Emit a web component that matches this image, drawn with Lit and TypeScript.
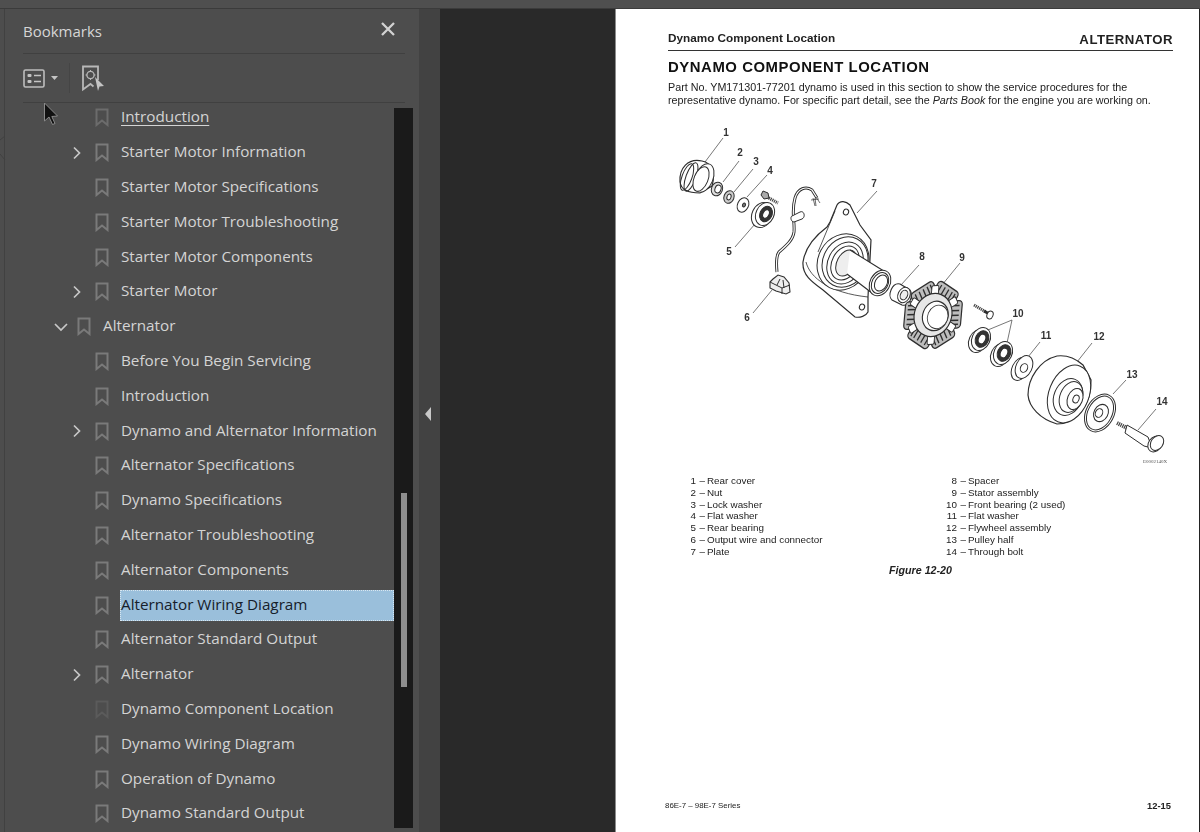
import { LitElement, html, css, svg } from "lit";
import { customElement } from "lit/decorators.js";

type Row = { t: string; l: number; c?: "r" | "d"; dim?: boolean; sel?: boolean; u?: boolean };
const rows: Row[] = [
  { t: "Introduction", l: 1, u: true },
  { t: "Starter Motor Information", l: 1, c: "r" },
  { t: "Starter Motor Specifications", l: 1 },
  { t: "Starter Motor Troubleshooting", l: 1 },
  { t: "Starter Motor Components", l: 1 },
  { t: "Starter Motor", l: 1, c: "r" },
  { t: "Alternator", l: 0, c: "d" },
  { t: "Before You Begin Servicing", l: 1 },
  { t: "Introduction", l: 1 },
  { t: "Dynamo and Alternator Information", l: 1, c: "r" },
  { t: "Alternator Specifications", l: 1 },
  { t: "Dynamo Specifications", l: 1 },
  { t: "Alternator Troubleshooting", l: 1 },
  { t: "Alternator Components", l: 1 },
  { t: "Alternator Wiring Diagram", l: 1, sel: true },
  { t: "Alternator Standard Output", l: 1 },
  { t: "Alternator", l: 1, c: "r" },
  { t: "Dynamo Component Location", l: 1, dim: true },
  { t: "Dynamo Wiring Diagram", l: 1 },
  { t: "Operation of Dynamo", l: 1 },
  { t: "Dynamo Standard Output", l: 1 },
];

const legendL = [
  ["1", "Rear cover"], ["2", "Nut"], ["3", "Lock washer"], ["4", "Flat washer"],
  ["5", "Rear bearing"], ["6", "Output wire and connector"], ["7", "Plate"],
];
const legendR = [
  ["8", "Spacer"], ["9", "Stator assembly"], ["10", "Front bearing (2 used)"], ["11", "Flat washer"],
  ["12", "Flywheel assembly"], ["13", "Pulley half"], ["14", "Through bolt"],
];

// Diagram uses screen-like coordinates; the svg viewBox starts at 660,115.
const e = (cx: number, cy: number, rx: number, ry: number, rot = 22, fill = "#fff") =>
  svg`<ellipse cx=${cx} cy=${cy} rx=${rx} ry=${ry} fill=${fill} transform="rotate(${rot} ${cx} ${cy})"/>`;
const leaders = [
  [723, 138, 705, 162], [739, 161, 723, 182], [753, 169, 734, 192], [767, 175, 747, 197],
  [735, 247, 755, 224], [753, 313, 772, 290], [877, 191, 857, 213], [919, 265, 901, 285],
  [960, 263, 942, 285], [1012, 320, 983, 332], [1012, 320, 1007, 343], [1040, 342, 1028, 357],
  [1092, 343, 1077, 362], [1126, 380, 1113, 394], [1156, 409, 1138, 430],
];
const labels: [string, number, number][] = [
  ["1", 726, 136], ["2", 740, 156], ["3", 756, 165], ["4", 770, 174], ["5", 729, 255], ["6", 747, 321],
  ["7", 874, 187], ["8", 922, 260], ["9", 962, 261], ["10", 1018, 317], ["11", 1046, 339],
  ["12", 1099, 340], ["13", 1132, 378], ["14", 1162, 405],
];
const teeth = [10, 70, 130, 190, 250, 310];

const diagram = svg`
  <g fill="#fff" stroke="#2e2e2e" stroke-width="1">
    ${leaders.map(([a, b, c, d]) => svg`<line x1=${a} y1=${b} x2=${c} y2=${d} stroke="#555" stroke-width=".8"/>`)}
    <!-- rear cover -->
    <path d="M702 161C688 158 679 168 680 182C681 190 688 193 700 193L712 186C716 172 712 163 702 161Z" stroke-width="1.2"/>
    ${e(687, 177, 5, 14, 20, "none")}${e(691, 177, 5, 15, 20, "none")}
    ${e(704, 178, 9, 15, 22)}${e(701, 179, 7, 13, 22)}
    <!-- nut, lock washer, flat washer -->
    ${e(717, 189, 5.5, 7, 20, "#ddd")}${e(718, 189, 3, 4, 20)}
    ${e(729, 197, 5, 6.5, 20, "#ccc")}${e(729, 197, 2, 3, 20)}
    ${e(743, 205, 5.5, 7.5, 25)}${e(744, 205, 1.5, 2, 25, "#777")}
    <path d="M767 197L778 203" stroke-width="3.2" stroke="#444" stroke-dasharray="1.2 .8"/>
    <path d="M763 191l5 2 1 5-5 1-3-4z" fill="#aaa"/>
    <!-- rear bearing -->
    ${e(762, 215, 10, 13, 25)}${e(765, 214, 9, 12, 25)}${e(766, 214, 6, 8, 25, "#333")}${e(766, 214, 3, 4.5, 25)}
    <!-- wire and connector -->
    <path d="M777 272C776 262 776 256 779 252C786 246 793 240 794 232C795 222 791 212 795 198C798 188 806 186 812 190L817 198" fill="none" stroke-width="3"/>
    <path d="M777 272C776 262 776 256 779 252C786 246 793 240 794 232C795 222 791 212 795 198C798 188 806 186 812 190L817 198" fill="none" stroke="#fff" stroke-width="1.200"/>
    <path d="M813 198l2 8M815 198l1 8M816 197l4 6M811 200l8-1" fill="none" stroke-width=".7"/>
    <path d="M792 216l8-4c4-2 6 5 2 7l-8 3c-3 0-4-5-2-6z" stroke-width="1"/>
    <path d="M770 282l3-3 5-4 6 2 5 6 1 9-4 2-10-3-6-3z" fill="#eee" stroke-width="1.1"/>
    <path d="M777 285l3-6M784 288l-1-8M770 282l12 6 8-3M782 288v6" fill="none"/>
    <!-- plate -->
    <path d="M827 227C815 236 805 248 803 262C802 275 812 282 823 290L855 317C860 318 866 316 868 312L868 297L871 240L860 225L850 205C846 201 840 200 837 205L830 222Z" stroke-width="1.2"/>
    <path d="M835 211L818 252M806 262C810 278 830 293 868 297" fill="none" stroke-width=".8"/>
    ${e(846, 212, 2.6, 3)}${e(862, 307, 2.6, 3)}
    ${e(843, 262, 25, 29, 28)}${e(845, 262, 22, 26, 28)}${e(845, 263, 17, 22, 28)}${e(845, 263, 13, 18, 28)}
    ${e(846, 263, 9, 14, 28, "#eee")}
    <path d="M850 250L887 273L872 293L847 274Z" stroke="none"/>
    <path d="M850 250L887 273M847 274L872 293" fill="none" stroke-width="1.1"/>
    ${e(880, 283, 10, 13.5, 28)}${e(880, 283, 8, 11, 28)}${e(881, 283, 6, 8.5, 28, "none")}
    <!-- spacer -->
    <path d="M900 284L910 290C914 296 909 307 902 305L892 300C887 296 892 282 900 284Z" stroke-width="1.1"/>
    ${e(904, 295, 6, 8, 25)}${e(904, 295, 3.5, 5, 25, "#eee")}
    <!-- stator -->
    <g transform="translate(933 315) rotate(22) scale(.84 1)">
      ${teeth.map((a) => svg`<g transform="rotate(${a})"><rect x="-14" y="-33" width="28" height="17" rx="4" fill="#bdbdbd" stroke-width="1.400"/><path d="M-9-30v11M-4-30v11M1-30v11M6-30v11M10-30v11" stroke-width="1.500"/></g>`)}
      ${teeth.map((a) => svg`<rect transform="rotate(${a + 30})" x="-4" y="-30" width="8" height="9" rx="1.500" fill="#fff"/>`)}
      <circle r="22" fill="#e6e6e6" stroke-width="1.300"/>
      <circle r="15" cx="3" stroke-width="1.300"/>
      <circle r="12" cx="6" stroke-width=".9"/>
    </g>
    <!-- small bolt -->
    <path d="M974 305L986 312" stroke-width="3" stroke="#444" stroke-dasharray="1.2 .8"/>
    <path d="M984 311L991 315" stroke-width="3"/>
    ${e(990, 315, 3, 4)}
    <!-- front bearings -->
    ${e(978, 341, 9, 12, 25)}${e(981, 339, 9, 12, 25)}${e(982, 339, 6.5, 8.5, 25, "#333")}${e(982, 339, 3.5, 5, 25)}
    ${e(1000, 355, 9, 12, 25)}${e(1003, 353, 9, 12, 25)}${e(1004, 353, 6.5, 8.5, 25, "#333")}${e(1004, 353, 3.5, 5, 25)}
    <!-- flat washer -->
    ${e(1020, 369, 8, 12, 25)}${e(1024, 367, 8, 12, 25)}${e(1024, 368, 3.5, 4.5, 25)}
    <!-- flywheel -->
    <path d="M1057 356C1040 360 1028 378 1028 395C1029 407 1040 419 1057 424C1075 424 1092 405 1091 380L1083 365C1075 358 1065 355 1057 356Z" stroke-width="1.2"/>
    ${e(1069, 394, 20, 30, 22)}${e(1068, 397, 14, 19, 22)}${e(1071, 397, 11, 16, 22)}
    ${e(1075, 399, 7.5, 11, 22)}${e(1076, 399, 3, 4, 22)}
    <!-- pulley -->
    ${e(1100, 413, 14, 20, 28)}${e(1100, 413, 12, 18, 28)}${e(1101, 413, 7, 9, 28)}${e(1099, 413, 3.5, 4.5, 28)}
    <!-- through bolt -->
    <path d="M1117 423L1127 428" stroke-width="4" stroke="#444" stroke-dasharray="1.2 .8"/>
    <path d="M1127 425L1148 437L1152 448L1144 446L1125 433Z"/>
    ${e(1155, 444, 6.5, 8.5, 35)}${e(1157, 443, 6, 8, 35)}
  </g>
  ${labels.map(([t, x, y]) => svg`<text class="lbl" x=${x} y=${y} text-anchor="middle">${t}</text>`)}
  <text class="code" x="1155" y="463" text-anchor="middle">E0002140X</text>
`;

@customElement("app-root")
export class AppRoot extends LitElement {
  static styles = css`
    :host { display: flex; flex-direction: column; width: 1200px; height: 832px; overflow: hidden; position: relative; background: #4e4e4e; }
    .topbar { height: 8px; flex: none; background: #4f4f4f; border-bottom: 1px solid #3b3b3b; }
    .main { flex: 1; min-height: 0; display: flex; }
    .rail { width: 4px; flex: none; background: #4d4d4d; border-right: 1px solid #414141; }
    .panel { width: 414px; flex: none; background: #4d4d4d; display: flex; flex-direction: column; font-family: "Open Sans", sans-serif; min-height: 0; }
    .title { height: 45px; flex: none; margin: 0 14px 0 18px; display: flex; align-items: center; justify-content: space-between; padding-right: 10px; border-bottom: 1px solid #404040; box-sizing: border-box; color: #d6d6d6; font-size: 15px; }
    .close { margin-top: -5px; }
    .tools { height: 49px; flex: none; margin: 0 14px 0 18px; display: flex; align-items: center; border-bottom: 1px solid #404040; box-sizing: border-box; }
    .tools svg { display: block; }
    .caret { margin-left: 6px; }
    .sep { width: 1px; height: 30px; background: #454545; margin: 0 11px 0 11px; }
    .body { flex: 1; min-height: 0; display: flex; }
    .tree { width: 389px; flex: none; overflow: hidden; }
    .row { height: 34.8px; display: flex; align-items: center; color: #d4d4d4; font-size: 15.25px; white-space: nowrap; }
    .row:first-child { margin-top: -2.5px; }
    .chev { width: 24px; flex: none; display: flex; }
    .bm { flex: none; margin-right: 11px; color: #7a7a7a; display: block; }
    .bm.dim { color: #5b5b5b; }
    .bm.soft { color: #6c6c6c; }
    .lab { flex: 1; height: 31px; line-height: 26px; box-sizing: border-box; border: 1px solid transparent; }
    .lab.sel { background: #9abfdb; color: #16202a; border: 1px dotted #d8e6f0; }
    .lab.u span { text-decoration: underline; text-underline-offset: 3px; }
    .track { width: 19px; flex: none; background: #1a1a1a; margin: 5px 0 4px; position: relative; }
    .thumb { position: absolute; left: 7px; width: 6px; top: 385px; height: 194px; background: #8e8e8e; }
    .splitter { width: 21px; flex: none; background: #424242; display: flex; align-items: center; justify-content: center; }
    .splitter svg { display: block; margin-top: -14px; margin-left: -3px; }
    .gap { width: 175px; flex: none; background: #292929; border-right: 1px solid #8c8c8c; }
    .page { flex: 1; min-width: 0; background: #fff; border-right: 1px solid #222; color: #222; font-family: "Liberation Sans", Arial, sans-serif; display: flex; flex-direction: column; padding: 22px 26px 21px 52px; filter: blur(.3px); }
    .head { display: flex; justify-content: space-between; align-items: flex-end; border-bottom: 1px solid #333; padding-bottom: 5px; }
    .h1 { font-size: 11.75px; margin-bottom: 1px; }
    .h2 { font-size: 13.2px; letter-spacing: .5px; margin-bottom: -2px; }
    h1 { margin: 8px 0 0; font-size: 14.9px; line-height: 17px; letter-spacing: .55px; color: #111; }
    p { margin: 5px 0 0; font-size: 10.76px; line-height: 13px; }
    .fig { display: block; margin: 8px 0 0 -8px; flex: none; }
    .lbl { font: bold 10px "Liberation Sans", Arial, sans-serif; fill: #333; }
    .code { font: 5px "Liberation Serif", serif; fill: #555; }
    .legend { display: flex; font-size: 9.85px; line-height: 11.75px; margin-top: 5px; }
    .col { display: grid; grid-template-columns: 17px 11px auto; align-content: start; }
    .col.l { margin-left: 11px; width: 261px; }
    .num { text-align: right; }
    .dash { padding-left: 3.5px; }
    .cap { margin: 7px 0 0 221px; font-size: 10.7px; font-weight: bold; font-style: italic; line-height: 13px; }
    .foot { margin-top: auto; display: flex; justify-content: space-between; align-items: center; margin-left: -3px; padding-right: 2px; font-size: 7.9px; }
    .foot b { font-size: 9.4px; }
    .cursor { position: absolute; left: 43px; top: 102px; }
    .notch { position: absolute; left: 0; top: 136px; }
  `;

  private chevron(c?: "r" | "d") {
    if (c === "r") return html`<svg width="12" height="14" viewBox="0 0 12 14"><path d="M3 1.5L8.5 7L3 12.5" fill="none" stroke="#c8c8c8" stroke-width="1.7"/></svg>`;
    if (c === "d") return html`<svg width="16" height="10" viewBox="0 0 16 10"><path d="M2 2L8 8L14 2" fill="none" stroke="#c8c8c8" stroke-width="1.7"/></svg>`;
    return null;
  }

  render() {
    return html`
      <div class="topbar"></div>
      <div class="main">
        <div class="rail"></div>
        <section class="panel">
          <div class="title">
            <span>Bookmarks</span>
            <svg class="close" width="14" height="14" viewBox="0 0 14 14"><path d="M1 1L13 13M13 1L1 13" stroke="#d2d2d2" stroke-width="2.3"/></svg>
          </div>
          <div class="tools">
            <svg width="22" height="19" viewBox="0 0 22 19" fill="none">
              <rect x="1" y="1" width="20" height="17" rx="1.5" stroke="#bdbdbd" stroke-width="1.6"/>
              <rect x="4.5" y="5" width="4" height="3" rx="1" fill="#c4c4c4"/><rect x="4.5" y="11" width="4" height="3" rx="1" fill="#c4c4c4"/>
              <path d="M11 6.5h7M11 12.5h7" stroke="#c4c4c4" stroke-width="1.6"/>
            </svg>
            <svg class="caret" width="7" height="4" viewBox="0 0 7 4"><path d="M0 0h7L3.5 4z" fill="#c4c4c4"/></svg>
            <div class="sep"></div>
            <svg width="24" height="27" viewBox="0 0 24 27" fill="none">
              <path d="M17 15V1.500H2V24.500L9.500 19L12.500 21.500" stroke="#b8b8b8" stroke-width="1.800"/>
              <circle cx="9.500" cy="10" r="3.600" stroke="#b8b8b8" stroke-width="1.300"/><path d="M9.500 5v1.500M9.500 13.500V15M4.500 10H6M13 10h1.500" stroke="#b8b8b8"/>
              <path d="M14 12L23 21L18.500 21.500L17 26Z" fill="#c4c4c4"/>
            </svg>
          </div>
          <div class="body">
            <div class="tree">
              ${rows.map((r) => html`
                <div class="row" style="padding-left:${48 + r.l * 18}px">
                  <div class="chev">${this.chevron(r.c)}</div>
                  <svg class="bm ${r.dim ? "dim" : ""} ${r.u ? "soft" : ""}" width="14" height="19" viewBox="0 0 14 19"><path d="M1.500 1.500h11v15.500L7 12.500L1.500 17Z" fill="none" stroke="currentColor" stroke-width="2"/></svg>
                  <div class="lab ${r.sel ? "sel" : ""} ${r.u ? "u" : ""}"><span>${r.t}</span></div>
                </div>`)}
            </div>
            <div class="track"><div class="thumb"></div></div>
          </div>
        </section>
        <div class="splitter"><svg width="6" height="14" viewBox="0 0 6 14"><path d="M6 0V14L0 7Z" fill="#c8c8c8"/></svg></div>
        <div class="gap"></div>
        <article class="page">
          <div class="head"><b class="h1">Dynamo Component Location</b><b class="h2">ALTERNATOR</b></div>
          <h1>DYNAMO COMPONENT LOCATION</h1>
          <p>Part No. YM171301-77201 dynamo is used in this section to show the service procedures for the<br>representative dynamo. For specific part detail, see the <i>Parts Book</i> for the engine you are working on.</p>
          <svg class="fig" width="520" height="355" viewBox="660 115 520 355">${diagram}</svg>
          <div class="legend">
            <div class="col l">${legendL.map(([n, t]) => html`<span class="num">${n}</span><span class="dash">–</span><span>${t}</span>`)}</div>
            <div class="col">${legendR.map(([n, t]) => html`<span class="num">${n}</span><span class="dash">–</span><span>${t}</span>`)}</div>
          </div>
          <div class="cap">Figure 12-20</div>
          <div class="foot"><span>86E-7 – 98E-7 Series</span><b>12-15</b></div>
        </article>
      </div>
      <svg class="notch" width="6" height="24" viewBox="0 0 6 24"><path d="M0 4L5 0M0 18L5 24" stroke="#414141" fill="none"/></svg>
      <svg class="cursor" width="16" height="24" viewBox="0 0 16 24"><path d="M1.500 1V19L6 15L9.500 22.500L12 21.500L8.800 14.500L14.500 14Z" fill="#111" stroke="#8a8a8a" stroke-width="1"/></svg>
    `;
  }
}
